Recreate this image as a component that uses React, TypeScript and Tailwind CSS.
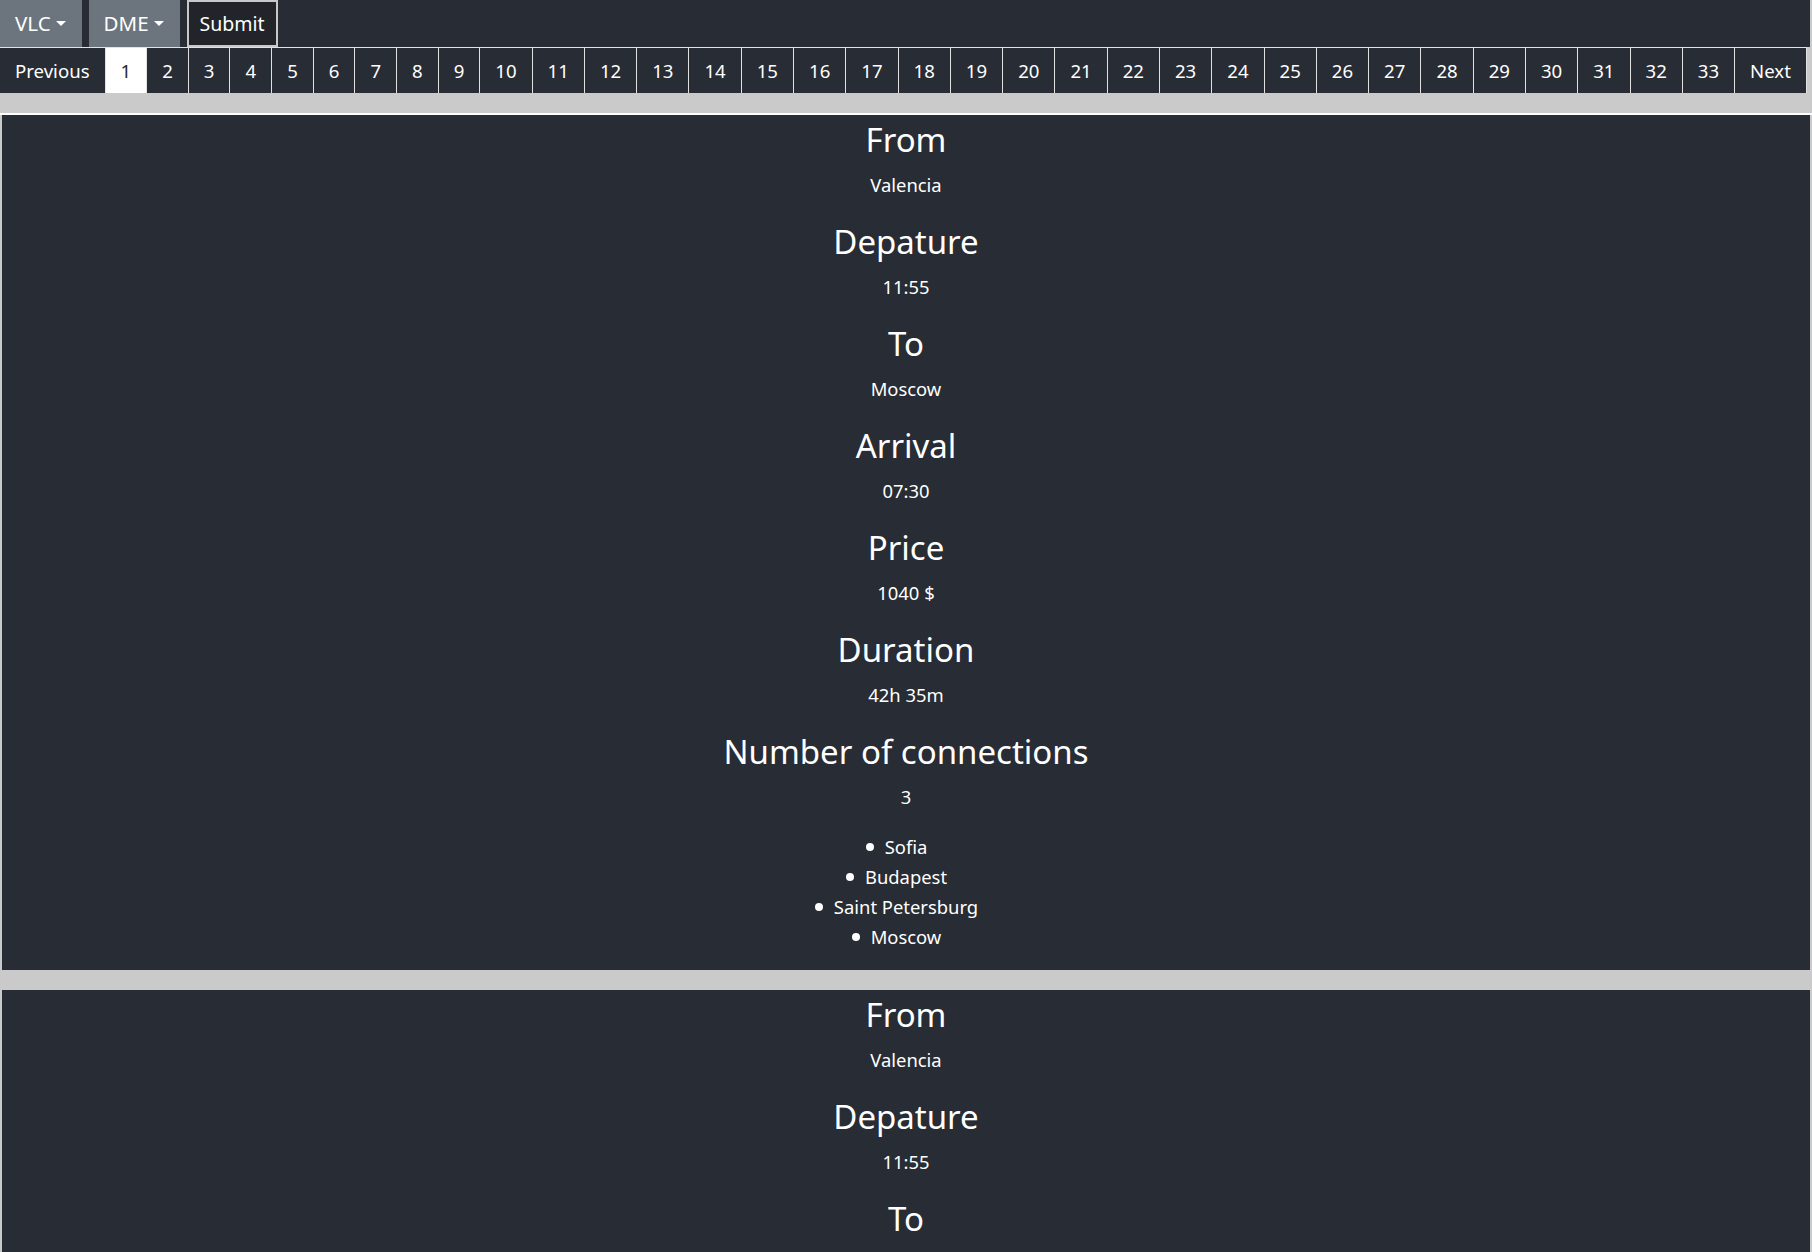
import React from 'react';

type Flight = {
  from: string;
  departure: string;
  to: string;
  arrival: string;
  price: string;
  duration: string;
  stops: string[];
};

const flights: Flight[] = [
  {
    from: 'Valencia',
    departure: '11:55',
    to: 'Moscow',
    arrival: '07:30',
    price: '1040 $',
    duration: '42h 35m',
    stops: ['Sofia', 'Budapest', 'Saint Petersburg', 'Moscow'],
  },
  {
    from: 'Valencia',
    departure: '11:55',
    to: 'Moscow',
    arrival: '09:10',
    price: '1105 $',
    duration: '44h 15m',
    stops: ['Sofia', 'Budapest', 'Saint Petersburg', 'Moscow'],
  },
];

const pages = Array.from({ length: 33 }, (_, i) => i + 1);

function Caret() {
  return (
    <span className="ml-[5px] inline-block h-0 w-0 border-x-[5.5px] border-t-[5.5px] border-x-transparent border-t-white align-middle" />
  );
}

function Field({ label, value }: { label: string; value: string }) {
  return (
    <>
      <h2 className="mb-[11px] text-[33px] leading-[40px] font-normal">{label}</h2>
      <p className="mb-[24px] text-[18.4px] leading-[27px]">{value}</p>
    </>
  );
}

function FlightCard({ flight }: { flight: Flight }) {
  return (
    <section className="mx-[2px] bg-[#282c34] pt-[5px] pb-[18px] text-center text-white">
      <Field label="From" value={flight.from} />
      <Field label="Depature" value={flight.departure} />
      <Field label="To" value={flight.to} />
      <Field label="Arrival" value={flight.arrival} />
      <Field label="Price" value={flight.price} />
      <Field label="Duration" value={flight.duration} />
      <h2 className="mb-[11px] text-[33px] leading-[40px] font-normal">Number of connections</h2>
      <p className="mb-[22px] text-[18.4px] leading-[27px]">{flight.stops.length - 1}</p>
      <ul className="text-[18.4px] leading-[30px]">
        {flight.stops.map((s) => (
          <li key={s}>
            <span className="relative inline-block">
              <span className="absolute top-1/2 -left-[19px] h-[8px] w-[8px] -translate-y-1/2 rounded-full bg-white" />
              {s}
            </span>
          </li>
        ))}
      </ul>
    </section>
  );
}

export default function App() {
  return (
    <div
      className="min-h-screen bg-[#cacaca] text-white"
      style={{ fontFamily: '"Noto Sans", "Open Sans", sans-serif' }}
    >
      <header className="mr-[2px] flex h-[47px] gap-[7px] bg-[#282c34]">
        <button type="button" className="flex items-center bg-[#6c757d] pr-[16px] pl-[15px] text-[20.5px] text-white">
          VLC
          <Caret />
        </button>
        <button type="button" className="flex items-center bg-[#6c757d] pr-[16px] pl-[15px] text-[20.5px] text-white">
          DME
          <Caret />
        </button>
        <button
          type="button"
          className="border-2 border-[#c8c8c8] bg-[#212529] px-[11px] text-[19.5px] text-white"
        >
          Submit
        </button>
      </header>

      <ul className="inline-flex border-t border-[#e2e2e2] bg-[#282c34] text-[18.6px] leading-[27px]">
        <li className="border-r border-[#e2e2e2] px-[15px] py-[9px]">Previous</li>
        {pages.map((p) => (
          <li
            key={p}
            className={
              p === 1
                ? 'border-r border-[#e2e2e2] bg-white px-[15px] py-[9px] text-[#282c34]'
                : 'border-r border-[#e2e2e2] px-[15px] py-[9px]'
            }
          >
            {p}
          </li>
        ))}
        <li className="border-r border-[#e2e2e2] px-[15px] py-[9px]">Next</li>
      </ul>

      <div className="mt-[20px] h-[2px] bg-white" />

      <div className="flex flex-col gap-[20px]">
        {flights.map((f, i) => (
          <FlightCard key={i} flight={f} />
        ))}
      </div>
    </div>
  );
}
